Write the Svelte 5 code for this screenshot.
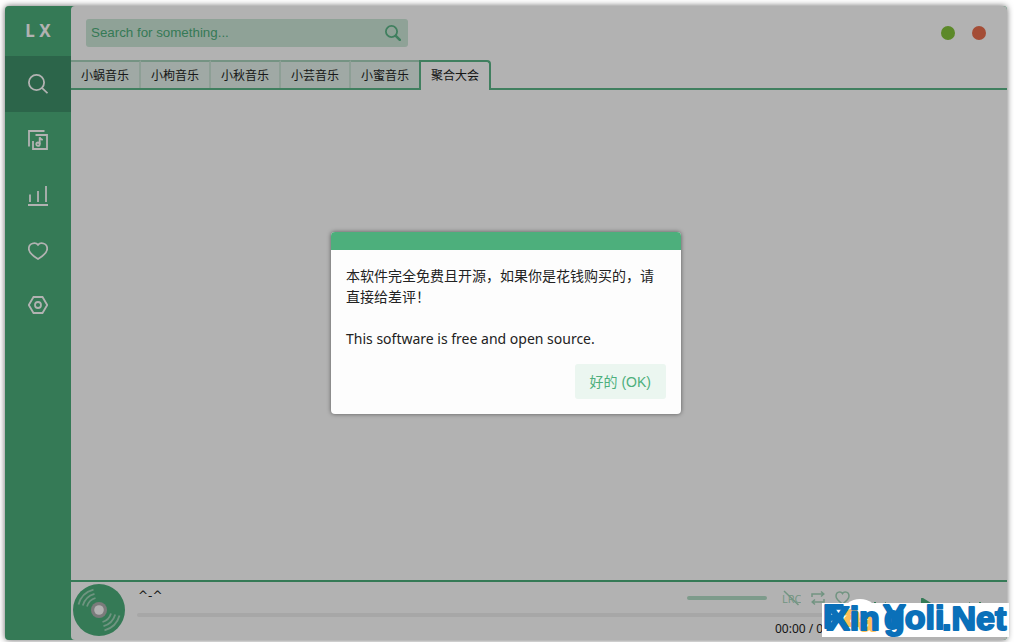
<script lang="ts">
  const sources = ["小蜗音乐", "小枸音乐", "小秋音乐", "小芸音乐", "小蜜音乐", "聚合大会"];

  let activeSource = $state("聚合大会");
  let keyword = $state("");
  let showNotice = $state(true);
</script>

<div class="shell">
  <div class="window">
    <aside>
      <div class="logo">L X</div>
      <nav>
        <a href="#search" class="active" aria-label="Search">
          <svg width="20" height="20" viewBox="0 0 20 20">
            <circle cx="8.5" cy="8.5" r="7.6" />
            <path d="M14.2 14.2l5.3 5" />
          </svg>
        </a>
        <a href="#songlist" aria-label="Song lists">
          <svg width="20" height="20" viewBox="0 0 20 20">
            <path d="M1 16.5V1h15.5M5 11v8h14V5H7.5" />
            <circle cx="10" cy="14.2" r="1.7" />
            <path d="M11.7 14.2V7.2c.4 1.8 1.4 2 3 2.8" />
          </svg>
        </a>
        <a href="#leaderboard" aria-label="Leaderboard">
          <svg width="20" height="20" viewBox="0 0 20 20">
            <path d="M0 19h20M2 8.5V16M10 5v11M18 0v16" />
          </svg>
        </a>
        <a href="#favorites" aria-label="Favorites">
          <svg width="20" height="18" viewBox="0 0 20 18">
            <path d="M10 17C7 15.2.8 11.1.8 6.800c0-6 6.700-6.800 9.200-4 2.5-2.800 9.200-2 9.200 4 0 4.3-6.200 8.400-9.200 10.200z" />
          </svg>
        </a>
        <a href="#settings" aria-label="Settings">
          <svg width="20" height="18" viewBox="0 0 20 18">
            <path d="M5.5 1h9L19.2 9l-4.700 8h-9L.8 9z" />
            <circle cx="10" cy="9" r="3" />
          </svg>
        </a>
      </nav>
    </aside>

    <div class="main">
      <header>
        <form class="search" onsubmit={(e) => e.preventDefault()}>
          <input type="text" aria-label="Search" placeholder="Search for something..." bind:value={keyword} />
          <button type="submit" aria-label="Search">
            <svg width="16" height="16" viewBox="0 0 16 16">
              <circle cx="6.5" cy="6.5" r="5.6" />
              <path class="handle" d="M10.8 10.8l4 4" />
            </svg>
          </button>
        </form>
        <div class="controls">
          <button class="min" aria-label="Minimize"></button>
          <button class="close" aria-label="Close"></button>
        </div>
      </header>

      <div class="tabs">
        {#each sources as name}
          <button class:active={name === activeSource} onclick={() => (activeSource = name)}>{name}</button>
        {/each}
      </div>

      <div class="content"></div>

      <footer>
        <svg class="disc" width="52" height="52" viewBox="0 0 52 52">
          <circle cx="26" cy="26" r="26" fill="#4daf7c" />
          <g fill="none" stroke="#9fd4b8" stroke-width="1.8">
            <path d="M5.5 20.5A21 21 0 0 1 20.5 5.7" />
            <path d="M9.8 21.5A17 17 0 0 1 21.5 9.8" />
            <path d="M14 22.5A12.5 12.5 0 0 1 22.5 14" />
            <path d="M46.5 31.5A21 21 0 0 1 31.5 46.3" />
            <path d="M42.2 30.5A17 17 0 0 1 30.5 42.2" />
            <path d="M38 29.5A12.5 12.5 0 0 1 29.5 38" />
          </g>
          <circle cx="26" cy="26" r="8" fill="#b0b0b0" />
          <circle cx="26" cy="26" r="4.8" fill="#fff" />
        </svg>
        <div class="track">
          <div class="row">
            <span class="title">^-^</span>
            <div class="volume"></div>
            <div class="actions">
              <button aria-label="Desktop lyrics">
                <svg width="19" height="16" viewBox="0 0 19 16">
                  <text x="0" y="13">LRC</text>
                  <path d="M2 1l14.5 14" />
                </svg>
              </button>
              <button aria-label="Play mode">
                <svg width="14" height="16" viewBox="0 0 14 16">
                  <path d="M1 7V4h11M10 1.5L12.8 4 10 6.5M13 9v3H2M4 9.5L1.2 12 4 14.5" />
                </svg>
              </button>
              <button aria-label="Add to list">
                <svg width="15" height="16" viewBox="0 0 15 16">
                  <path d="M7.5 14C5 12.2 1 9.5 1 6c0-4.5 5-5 6.5-2.500C9 1 14 1.5 14 6c0 3.5-4 6.2-6.5 8z" />
                </svg>
              </button>
            </div>
          </div>
          <div class="progress"></div>
          <div class="time">00:00 / 00:00</div>
        </div>
        <div class="player">
          <button aria-label="Previous">
            <svg width="20" height="20" viewBox="0 0 20 20"><path d="M16 4v12L7 10zM4 4h2v12H4z" /></svg>
          </button>
          <button aria-label="Play">
            <svg width="20" height="20" viewBox="0 0 20 20"><path d="M3 1q0-2 2-1l13 8q3 2 0 4L5 19q-2 1-2-1z" /></svg>
          </button>
          <button aria-label="Next">
            <svg width="20" height="20" viewBox="0 0 20 20"><path d="M4 4v12l9-6zM14 4h2v12h-2z" /></svg>
          </button>
        </div>
      </footer>
    </div>

    {#if showNotice}
      <div class="overlay">
        <div class="dialog" role="dialog" aria-modal="true" aria-label="Notice">
          <div class="bar"></div>
          <div class="body">
            <p>本软件完全免费且开源，如果你是花钱购买的，请直接给差评！<br /><br />This software is free and open source.</p>
            <button onclick={() => (showNotice = false)}>好的 (OK)</button>
          </div>
        </div>
      </div>
    {/if}
  </div>

  <svg class="badge" width="187" height="38" viewBox="0 0 187 38">
    <ellipse cx="38" cy="14" rx="17" ry="14" fill="#fff" />
    <path d="M0 4h187v34H0z" fill="#fff" />
    <g class="brand">
      <text x="1" y="29">F</text>
      <text class="accent" x="22" y="27">a</text>
      <text class="accent" x="37" y="32">a</text>
      <text x="5" y="31">Xin</text>
      <text x="61" y="29">Y</text>
      <text x="62" y="30">goli</text>
      <text x="120" y="31">.Net</text>
    </g>
  </svg>
</div>

<style>
  :global(body) {
    margin: 0;
    background: #fff;
  }
  .shell {
    --green: #4daf7c;
    position: relative;
    box-sizing: border-box;
    height: 100vh;
    padding: 6px 7px 2px 5px;
    overflow: hidden;
    font-family: "Noto Sans", "Noto Sans CJK SC", sans-serif;
    font-size: 12px;
    color: #222;
  }
  button {
    border: none;
    padding: 0;
    background: none;
    font-family: inherit;
    color: inherit;
    cursor: pointer;
  }
  svg {
    display: block;
  }
  .window {
    position: relative;
    display: flex;
    height: 100%;
    border-radius: 4px;
    background: var(--green);
    box-shadow: 0 0 6px rgba(0, 0, 0, 0.6);
    overflow: hidden;
  }
  aside {
    flex: 0 0 66px;
    color: #fff;
  }
  .logo {
    height: 50px;
    line-height: 50px;
    text-align: center;
    font-size: 17px;
    font-weight: bold;
  }
  nav a {
    display: flex;
    justify-content: center;
    padding: 18px 0;
  }
  nav a.active {
    background: #3f916a;
  }
  nav svg {
    fill: none;
    stroke: #fff;
    stroke-width: 1.8;
  }
  .main {
    flex: 1;
    min-width: 0;
    display: flex;
    flex-direction: column;
    border-radius: 4px;
    background: #fff;
  }
  header {
    display: flex;
    align-items: center;
    justify-content: space-between;
    height: 54px;
    padding: 0 21px 0 15px;
  }
  .search {
    display: flex;
    align-items: center;
    width: 36%;
    max-width: 322px;
    min-width: 200px;
    height: 28px;
    border-radius: 3px;
    background: #cde8d8;
  }
  .search input {
    flex: 1;
    min-width: 0;
    border: none;
    outline: none;
    padding: 0 5px 2px;
    background: none;
    font-family: "Liberation Sans", Arial, sans-serif;
    color: var(--green);
  }
  .search input::placeholder {
    color: var(--green);
  }
  .search button {
    padding: 0 7px;
  }
  .search svg {
    fill: none;
    stroke: #5cb788;
    stroke-width: 1.8;
  }
  .search .handle {
    stroke-width: 2.6;
    stroke-linecap: round;
  }
  .controls {
    display: flex;
    gap: 17px;
  }
  .controls button {
    width: 14px;
    height: 14px;
    border-radius: 50%;
  }
  .min {
    background: #85c43b;
  }
  .close {
    background: #eb6f4e;
  }
  .tabs {
    display: flex;
    height: 28px;
    border-bottom: 2px solid #5cb788;
  }
  .tabs button {
    box-sizing: border-box;
    height: 28px;
    padding: 0 10px;
    border: 2px solid #cae4d6;
    border-width: 2px 2px 0 0;
    border-top-color: #a8d3bc;
    background: #e5f2ec;
    font-size: 12px;
  }
  .tabs button.active {
    height: 30px;
    margin-left: -2px;
    padding-bottom: 2px;
    border: 2px solid #5cb788;
    border-bottom: none;
    border-radius: 0 4px 0 0;
    background: #fff;
  }
  .content {
    flex: 1;
  }
  footer {
    display: flex;
    height: 58px;
    border-top: 2px solid var(--green);
  }
  .disc {
    margin: 2px 12px 0 2px;
  }
  .track {
    flex: 1;
    min-width: 0;
  }
  .row {
    display: flex;
    align-items: center;
    height: 30px;
    padding-top: 1px;
  }
  .title {
    flex: 1;
    padding: 0 0 4px 1px;
    font-family: "DejaVu Sans", sans-serif;
    font-size: 12px;
    line-height: 20px;
  }
  .volume {
    width: 80px;
    height: 4px;
    margin-right: 15px;
    border-radius: 2px;
    background: #b4dec7;
  }
  .actions {
    display: flex;
    gap: 10px;
  }
  .actions svg {
    fill: none;
    stroke: #a4d5ba;
    stroke-width: 1.5;
  }
  .actions text {
    font-family: "Open Sans", sans-serif;
    font-size: 11px;
    fill: #a4d5ba;
    stroke: none;
  }
  .progress {
    height: 4px;
    border-radius: 2px;
    background: #efefef;
  }
  .time {
    padding: 3px 3px 0 0;
    text-align: right;
    line-height: 18px;
  }
  .player {
    box-sizing: border-box;
    display: flex;
    align-items: center;
    justify-content: space-between;
    width: 157px;
    padding: 0 22px 6px 20px;
  }
  .player svg {
    fill: var(--green);
  }
  .overlay {
    position: absolute;
    inset: 0;
    display: flex;
    align-items: center;
    justify-content: center;
    background: rgba(0, 0, 0, 0.3);
  }
  .dialog {
    width: 350px;
    border-radius: 4px;
    background: #fdfdfd;
    box-shadow: 0 0 4px rgba(0, 0, 0, 0.5);
    overflow: hidden;
  }
  .bar {
    height: 18px;
    background: var(--green);
  }
  .body {
    display: flex;
    flex-direction: column;
    gap: 15px;
    padding: 15px;
  }
  .body p {
    margin: 0;
    font-size: 14px;
    line-height: 21px;
  }
  .body button {
    align-self: flex-end;
    height: 35px;
    padding: 0 15px 2px;
    border-radius: 3px;
    background: #ebf6f0;
    font-family: "Liberation Sans", "Noto Sans CJK SC", sans-serif;
    font-size: 14px;
    color: var(--green);
  }
  .badge {
    position: absolute;
    right: 5px;
    bottom: 5px;
    overflow: visible;
  }
  .brand {
    font-family: "Liberation Sans", Arial, sans-serif;
    font-size: 34px;
    font-weight: bold;
    fill: #0a70b9;
    stroke: #0a70b9;
    stroke-width: 2;
    stroke-linejoin: round;
  }
  .accent {
    font-size: 30px;
    fill: #fdbf57;
    stroke: #fdbf57;
  }
</style>
